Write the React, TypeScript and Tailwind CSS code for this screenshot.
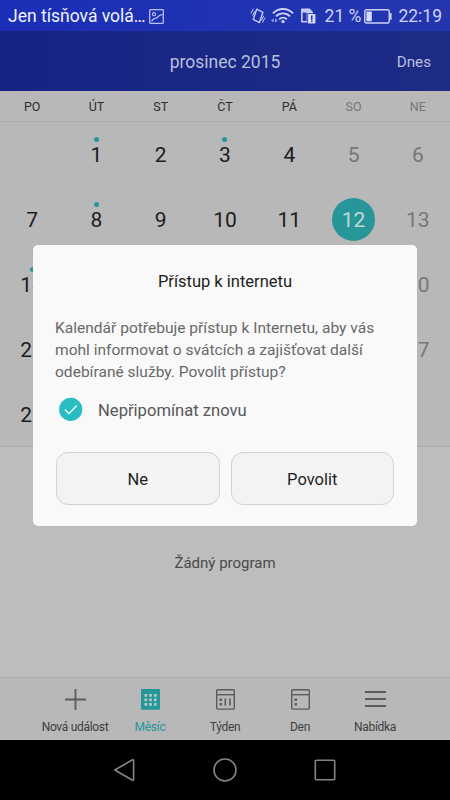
import type { ReactNode } from "react";

const weekdays = ["PO", "ÚT", "ST", "ČT", "PÁ", "SO", "NE"];
const days: (number | null)[] = [null, ...Array.from({ length: 31 }, (_, i) => i + 1)];
const eventDays = [1, 3, 8, 14];

function PictureIcon() {
  return (
    <svg width="15" height="15" viewBox="0 0 15 15" fill="none" stroke="#b9c0f5" strokeWidth="1.3">
      <rect x="0.7" y="0.7" width="13.6" height="13.6" rx="0.8" />
      <circle cx="5" cy="5.2" r="1.6" strokeWidth="1.1" />
      <path d="M2.6 12.4 C4 9 5.5 9.3 7.3 9 C9 8.6 9 6 13.6 5.3" />
    </svg>
  );
}

function VibrateIcon() {
  return (
    <svg width="16" height="16" viewBox="0 0 16 16" fill="none" stroke="#c3c9f5" strokeWidth="1.4">
      <path d="M6.7 1.2 L12.9 4.3 L9.4 14.6 L3.2 11.4 Z" strokeLinejoin="round" />
      <path d="M3.4 0.8 L0.9 5.6 M5 3 L2.6 7.6 M15 9.6 L12.4 14.6 M13.9 7.6 L11.4 12.6" strokeWidth="1" />
    </svg>
  );
}

function WifiIcon() {
  return (
    <svg width="23" height="16" viewBox="0 0 23 16" fill="none" stroke="#ccd1f7" strokeWidth="1.9">
      <path d="M2 5.4 C7.2 -0.4 16.8 -0.4 22 5.4" />
      <path d="M5 8.4 C8.7 4.4 15.3 4.4 19 8.4" />
      <path d="M8.2 11.3 C10.4 9 13.6 9 15.8 11.3" />
      <circle cx="12" cy="13.6" r="1.7" fill="#ccd1f7" stroke="none" />
      <path d="M0 12.5 L2.7 10.4 V14.6 Z M6.7 12.5 L4 10.4 V14.6 Z" fill="#9aa4ea" stroke="none" />
    </svg>
  );
}

function SimIcon() {
  return (
    <svg width="15" height="16" viewBox="0 0 15 16">
      <path d="M1 0.5 H8.6 L12 4 V5.2 H6.3 V14.5 H1 Q0 14.5 0 13.5 V1.5 Q0 0.5 1 0.5 Z" fill="#c6ccf6" />
      <path d="M1.6 4.6 H5.6 V13 H1.6 Z" fill="#2637ab" />
      <rect x="7" y="6" width="7.4" height="9.6" rx="0.7" fill="#d5d9fa" />
      <path d="M10 7.5 H11.5 V11.7 H10 Z M10 12.6 H11.5 V14.1 H10 Z" fill="#2637ab" />
    </svg>
  );
}

function BatteryIcon() {
  return (
    <svg width="28" height="15" viewBox="0 0 28 15" fill="none">
      <rect x="0.8" y="0.8" width="24.4" height="13.2" rx="1.6" stroke="#ced2f8" strokeWidth="1.4" />
      <rect x="2.4" y="2.5" width="5.4" height="9.8" fill="#d9ddfb" />
      <path d="M26 4 H27.6 V10.8 H26 Z" fill="#ced2f8" />
    </svg>
  );
}

function CalendarFrame({ children }: { children: ReactNode }) {
  return (
    <svg width="19" height="21" viewBox="0 0 19 21" fill="none" stroke="#5b5b5b" strokeWidth="1.4">
      <rect x="0.7" y="0.7" width="17.6" height="19.4" rx="1" />
      <path d="M1 5.7 H18" />
      {children}
    </svg>
  );
}

const tabs: { label: string; icon: ReactNode; active?: boolean }[] = [
  {
    label: "Nová událost",
    icon: (
      <svg width="21" height="21" viewBox="0 0 21 21" stroke="#5b5b5b" strokeWidth="1.8">
        <path d="M10.5 0 V21 M0 10.5 H21" />
      </svg>
    ),
  },
  {
    label: "Měsíc",
    active: true,
    icon: (
      <svg width="19" height="21" viewBox="0 0 19 21">
        <rect width="19" height="20.7" rx="1" fill="#269698" />
        <path
          d="M3.5 5h2.7v2.7h-2.7z M8.2 5h2.7v2.7h-2.7z M12.9 5h2.7v2.7h-2.7z M3.5 9.5h2.7v2.7h-2.7z M8.2 9.5h2.7v2.7h-2.7z M12.9 9.5h2.7v2.7h-2.7z M3.5 14h2.7v2.7h-2.7z M8.2 14h2.7v2.7h-2.7z M12.9 14h2.7v2.7h-2.7z"
          fill="#b0cccc"
        />
      </svg>
    ),
  },
  {
    label: "Týden",
    icon: (
      <CalendarFrame>
        <path d="M4.8 9.5 V12 M4.8 14 V16.5" strokeWidth="2.5" />
        <path d="M9.3 9.5 V16.5 M14 9.5 V16.5" strokeWidth="1.6" />
      </CalendarFrame>
    ),
  },
  {
    label: "Den",
    icon: (
      <CalendarFrame>
        <path d="M4.8 9.5 V12 M4.8 14 V16.5" strokeWidth="2.5" />
      </CalendarFrame>
    ),
  },
  {
    label: "Nabídka",
    icon: (
      <svg width="21" height="21" viewBox="0 0 21 21" stroke="#5b5b5b" strokeWidth="1.8">
        <path d="M0 3 H21 M0 10 H21 M0 17 H21" />
      </svg>
    ),
  },
];

export default function App() {
  return (
    <div className="relative flex h-[800px] w-[450px] flex-col overflow-hidden bg-[#b8b8b8] font-['Roboto',sans-serif]">
      <div className="flex h-[31px] shrink-0 items-center bg-gradient-to-r from-[#1a2eb7] to-[#2436ae] pt-px pl-2 text-[17.5px]">
        <span className="w-[137px] whitespace-nowrap text-[#f0f2ff]">Jen tísňová volá…</span>
        <span className="ml-1"><PictureIcon /></span>
        <div className="ml-auto flex items-center pr-2 text-[#cfd3f8]">
          <VibrateIcon />
          <span className="ml-[5px]"><WifiIcon /></span>
          <span className="ml-[7px]"><SimIcon /></span>
          <span className="ml-[9px] whitespace-nowrap">21 %</span>
          <span className="ml-[3px]"><BatteryIcon /></span>
          <span className="ml-1.5">22:19</span>
        </div>
      </div>

      <header className="grid h-[60px] shrink-0 grid-cols-[1fr_auto_1fr] items-center bg-gradient-to-r from-[#162384] to-[#1f2c86] pr-[19px] pl-[19px] pt-0.5 text-[#b9bfdf]">
        <span />
        <h1 className="text-[17.5px]">prosinec 2015</h1>
        <span className="justify-self-end text-[15.2px]">Dnes</span>
      </header>

      <div className="grid h-[31px] shrink-0 grid-cols-7 items-center border-b border-[#acacac] pt-0.5 text-center text-[12.5px]">
        {weekdays.map((d, i) => (
          <span key={d} className={i > 4 ? "text-[#777777]" : "text-[#2d2d2d]"}>{d}</span>
        ))}
      </div>

      <div className="grid h-[325px] shrink-0 auto-rows-[65px] grid-cols-7 border-b border-[#acacac] text-[21px]">
        {days.map((d, i) => {
          const weekend = i % 7 > 4;
          const today = d === 12;
          return (
            <div key={i} className="relative flex items-center justify-center">
              {d !== null && eventDays.includes(d) && (
                <i className="absolute top-[15px] size-[5px] rounded-full bg-[#269698]" />
              )}
              {d !== null && (
                <span
                  className={
                    today
                      ? "flex size-[43px] items-center justify-center rounded-full bg-[#269698] pt-0.5 text-[#c0d6d6]"
                      : weekend
                        ? "pt-0.5 text-[#777777]"
                        : "pt-0.5 text-[#1c1c1c]"
                  }
                >
                  {d}
                </span>
              )}
            </div>
          );
        })}
      </div>

      <div className="flex flex-1 items-center justify-center bg-[#bdbdbd] text-[15px] text-[#4a4a4a]">
        <p className="pt-0.5">Žádný program</p>
      </div>

      <div className="flex h-[63px] shrink-0 justify-center border-t border-[#a9a9a9] bg-[#b8b8b8] text-[12px] leading-[18px] tracking-[-0.3px]">
        {tabs.map((t) => (
          <div key={t.label} className="flex w-[75px] flex-col items-center pt-[11px]">
            {t.icon}
            <span className={t.active ? "mt-2 whitespace-nowrap text-[#269698]" : "mt-2 whitespace-nowrap text-[#3e3e3e]"}>
              {t.label}
            </span>
          </div>
        ))}
      </div>

      <nav className="flex h-[60px] shrink-0 items-center justify-center bg-black">
        {[
          <path key="back" d="M1.8 12 L19.5 1.8 Q20.6 1.5 20.6 2.5 V21.5 Q20.6 22.5 19.5 22.2 Z" />,
          <circle key="home" cx="12" cy="12" r="11" />,
          <rect key="recent" x="2.3" y="2.3" width="19.4" height="19.4" rx="1" />,
        ].map((shape) => (
          <div key={shape.key} className="flex w-[100px] justify-center">
            <svg width="24" height="24" viewBox="0 0 24 24" fill="none" stroke="#858585" strokeWidth="1.6" strokeLinejoin="round">
              {shape}
            </svg>
          </div>
        ))}
      </nav>

      <div role="dialog" className="absolute top-[245px] left-[33px] flex h-[281px] w-[384px] flex-col rounded-[5px] bg-[#f9f9f9] px-[23px]">
        <h2 className="mt-[25px] text-center text-[16.5px] leading-6 text-[#1d1d1d]">Přístup k internetu</h2>
        <p className="mt-[23px] -ml-px text-[15.55px] leading-[22px] whitespace-nowrap text-[#686868]">
          Kalendář potřebuje přístup k Internetu, aby vás
          <br />
          mohl informovat o svátcích a zajišťovat další
          <br />
          odebírané služby. Povolit přístup?
        </p>
        <label className="mt-[14px] flex h-6 items-center gap-[15px] pl-[3px] text-[16.6px] text-[#585858]">
          <svg width="24" height="24" viewBox="0 0 24 24" fill="none">
            <circle cx="11.7" cy="12.4" r="11.6" fill="#2abcc3" />
            <path d="M6 12.6 L10 16.6 L17.8 8.5" stroke="#d9f6f7" strokeWidth="1.5" />
          </svg>
          <span className="pt-1">Nepřipomínat znovu</span>
        </label>
        <div className="mt-[31px] flex h-[53px] gap-[11px] text-[16.5px] text-[#1f1f1f]">
          <button className="flex-1 rounded-[12px] border border-[#d2d2d2] bg-[#f3f3f3] pt-[3px]">Ne</button>
          <button className="flex-1 rounded-[12px] border border-[#d2d2d2] bg-[#f3f3f3] pt-[3px]">Povolit</button>
        </div>
      </div>
    </div>
  );
}
